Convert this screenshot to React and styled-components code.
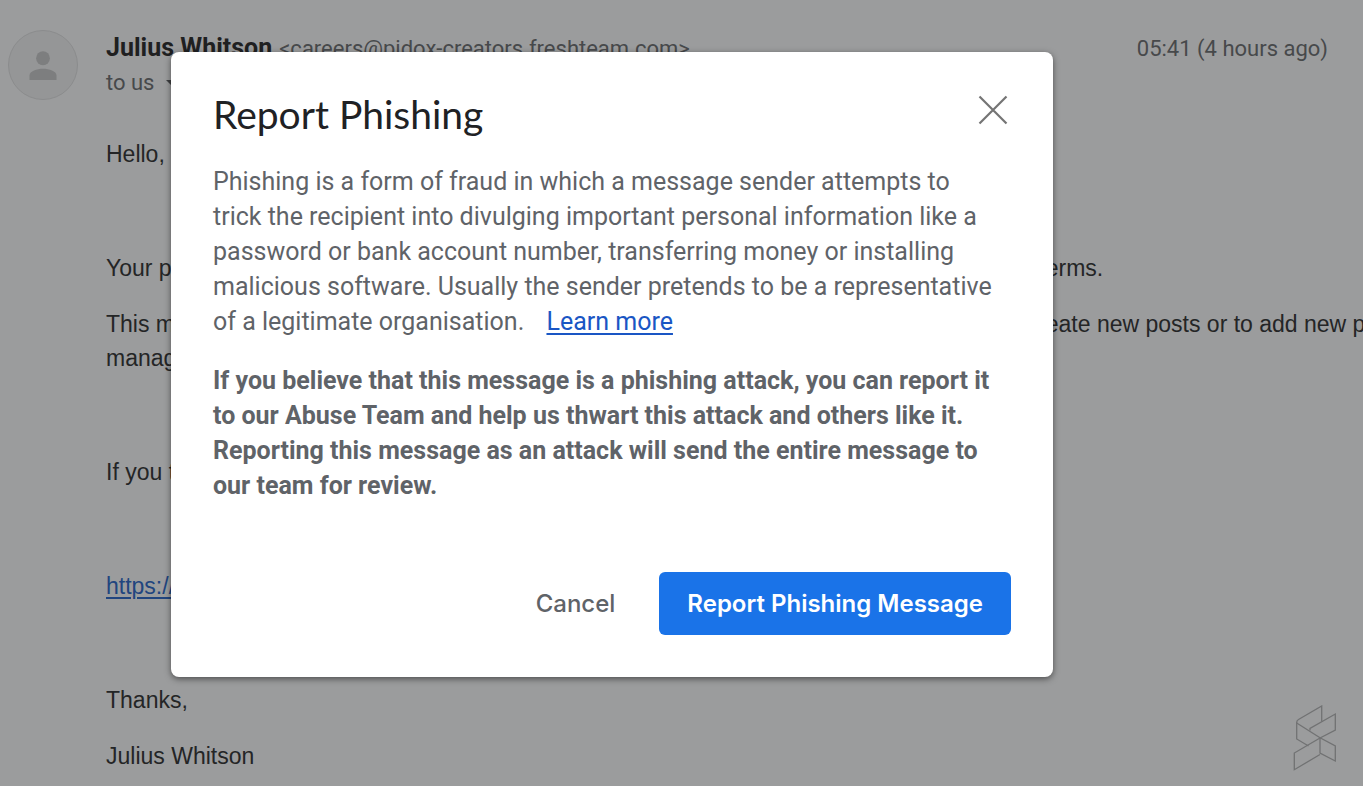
import styled, { createGlobalStyle } from 'styled-components'


function App() {
    return (
        <Container>
            <GlobalStyle/>
            <Message>
                <Avatar>
                    <svg width="36" height="36" viewBox="0 0 24 24" fill="#7d7e7f" aria-hidden="true">
                        <circle cx="12" cy="7.5" r="4.6" />
                        <path d="M3 22v-3c0-3 5-4.500 9-4.500s9 1.500 9 4.500v3z" />
                    </svg>
                </Avatar>
                <Mail>
                    <Header>
                        <Sender>
                            <SenderName>Julius Whitson</SenderName>
                            <Email>&lt;careers@pidox-creators.freshteam.com&gt;</Email>
                        </Sender>
                        <Time>05:41 (4 hours ago)</Time>
                    </Header>
                    <Recipient>
                        to us
                        <svg width="12" height="6" viewBox="0 0 12 6" fill="#3f4042" aria-hidden="true">
                            <path d="M0 0h12L6 6z" />
                        </svg>
                    </Recipient>
                    <Body>
                        <Block space="wide">Hello,</Block>
                        <Block>
                            <Row><span>Your p</span><span>erms.</span></Row>
                        </Block>
                        <Block space="wide">
                            <Row><span>This m</span><span>eate new posts or to add new po</span></Row>
                            <Row><span>manag</span></Row>
                        </Block>
                        <Block space="wide">If you t</Block>
                        <Block space="wide"><MailLink href="#">https://</MailLink></Block>
                        <Block>Thanks,</Block>
                        <Block>Julius Whitson</Block>
                    </Body>
                </Mail>
            </Message>
            <Overlay>
                <Dialog role="dialog" aria-labelledby="dialog-title">
                    <Top>
                        <Title id="dialog-title">Report Phishing</Title>
                        <Close aria-label="Close">
                            <svg width="30" height="30" viewBox="0 0 30 30" stroke="#747474" strokeWidth="2.2" aria-hidden="true">
                                <path d="M1.5 1.5l27 27M28.5 1.5l-27 27" />
                            </svg>
                        </Close>
                    </Top>
                    <Text>
                        Phishing is a form of fraud in which a message sender attempts to<br/>
                        trick the recipient into divulging important personal information like a<br/>
                        password or bank account number, transferring money or installing<br/>
                        malicious software. Usually the sender pretends to be a representative<br/>
                        of a legitimate organisation. <LearnMore href="#">Learn more</LearnMore>
                    </Text>
                    <Text type="strong">
                        If you believe that this message is a phishing attack, you can report it<br/>
                        to our Abuse Team and help us thwart this attack and others like it.<br/>
                        Reporting this message as an attack will send the entire message to<br/>
                        our team for review.
                    </Text>
                    <Actions>
                        <Button>Cancel</Button>
                        <Button type="button" $filled>Report Phishing Message</Button>
                    </Actions>
                </Dialog>
            </Overlay>
            <Logo width="44" height="66" viewBox="0 0 44 66" aria-hidden="true">
                <path d="M28.700 16.500V1L5.500 14.500Q3.700 15.500 3.700 17.500V34L15.500 41" />
                <path d="M3.700 18L27 32.700L42.300 41V56L27 48V32.700" />
                <path d="M17 25.500V23.500L42.300 9V25L27 33L1.300 48V64.700L27 49.500" />
            </Logo>
        </Container>
    )
}

const GlobalStyle=createGlobalStyle`
    * {
        box-sizing: border-box;
    }
    body {
        margin: 0;
        background-color: #9b9c9d;
        font-family: Roboto, sans-serif;
    }
`;

const Container=styled.div`
    position: relative;
    min-height: 100vh;
    overflow: hidden;
`;

const Message=styled.div`
    display: flex;
    gap: 28px;
    padding: 30px 0 0 8px;
`;

const Avatar=styled.div`
    display: flex;
    flex-shrink: 0;
    align-items: center;
    justify-content: center;
    width: 70px;
    height: 70px;
    border: 1px solid #8b8c8d;
    border-radius: 50%;
    background-color: #959697;
`;

const Mail=styled.div`
    flex: 1;
    min-width: 0;
`;

const Header=styled.div`
    display: flex;
    justify-content: space-between;
    align-items: baseline;
    padding-right: 35px;
    line-height: 36px;
    white-space: nowrap;
`;

const Sender=styled.div`
    display: flex;
    align-items: baseline;
    gap: 7px;
`;

const SenderName=styled.span`
    font-size: 25px;
    font-weight: 700;
    color: #1f2021;
`;

const Email=styled.span`
    font-size: 22px;
    color: #47494b;
`;

const Time=styled.span`
    font-size: 22px;
    color: #47494b;
`;

const Recipient=styled.div`
    display: flex;
    align-items: center;
    gap: 12px;
    font-size: 22px;
    line-height: 32px;
    color: #47494b;
`;

const Body=styled.div`
    padding: 38px 4px 0 0;
    font-family: "Liberation Sans", Arial, sans-serif;
    font-size: 23px;
    line-height: 34px;
    color: #242526;
    white-space: nowrap;
`;

const Block=styled.div`
    margin-bottom: ${(props) => props.space === "wide" ? "80px" : "22px"};

    &:last-child {
        margin-bottom: 0;
    }
`;

const Row=styled.div`
    display: grid;
    grid-template-columns: 3fr 1fr;

    span {
        min-width: 0;
    }
`;

const MailLink=styled.a`
    color: #21457f;
    text-decoration-thickness: 2px;
    text-underline-offset: 3px;
`;

const Overlay=styled.div`
    position: absolute;
    inset: 0;
    padding: 52px 310px 0 171px;
`;

const Dialog=styled.div`
    padding: 42px;
    border-radius: 8px;
    background-color: white;
    box-shadow: 0 2px 6px rgba(0, 0, 0, 0.5);
`;

const Top=styled.div`
    display: flex;
    justify-content: space-between;
    align-items: flex-start;
    margin-bottom: 30px;
`;

const Title=styled.h1`
    margin: 0;
    font-family: Lato, sans-serif;
    font-size: 39px;
    font-weight: 400;
    line-height: 40px;
    color: #202124;
`;

const Close=styled.button`
    display: flex;
    padding: 1px 3px;
    border: none;
    background: none;
    cursor: pointer;
`;

const Text=styled.p`
    margin: 0 0 24px;
    font-size: 25px;
    font-weight: ${(props) => props.type === "strong" ? "700" : "400"};
    line-height: 35px;
    color: #5f6368;
    white-space: nowrap;
`;

const LearnMore=styled.a`
    margin-left: 16px;
    color: #1a56c4;
    text-decoration-thickness: 2px;
    text-underline-offset: 3px;
`;

const Actions=styled.div`
    display: flex;
    justify-content: flex-end;
    gap: 16px;
    margin-top: 69px;
`;

const Button=styled.button`
    height: 63px;
    padding: 0 28px;
    border: none;
    border-radius: 6px;
    background-color: ${(props) => props.$filled ? "#1a73e8" : "transparent"};
    color: ${(props) => props.$filled ? "white" : "#5f6368"};
    font-family: Inter, sans-serif;
    font-size: 24px;
    font-weight: ${(props) => props.$filled ? "600" : "500"};
    cursor: pointer;
`;

const Logo=styled.svg`
    position: absolute;
    right: 26px;
    bottom: 15px;
    fill: none;
    stroke: #717273;
    stroke-width: 1.300;
`;

export default App;
